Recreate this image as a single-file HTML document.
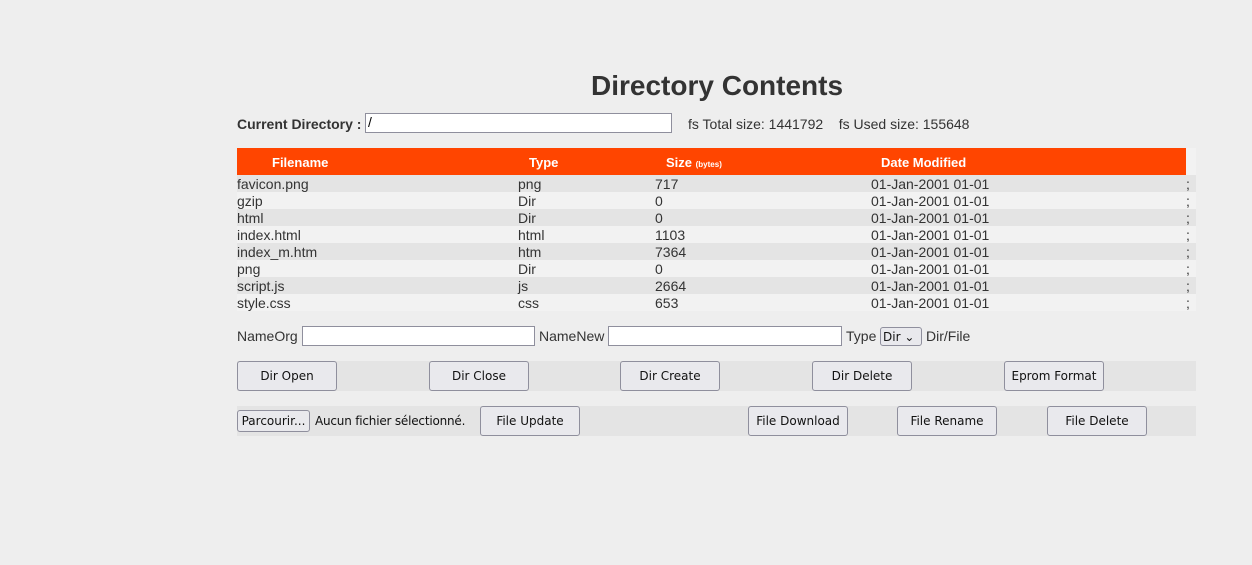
<!DOCTYPE html><html><head><style>
body{margin:0;width:1252px;height:565px;background:#eee;font-family:"Liberation Sans",sans-serif;color:#333;position:relative;overflow:hidden}
.a{position:absolute;white-space:nowrap}
.t{font-size:14px}
.btn{position:absolute;width:98px;height:28px;border:1px solid #8f8f9d;border-radius:3px;background:#e9e9ed;font-family:"DejaVu Sans",sans-serif;font-size:12px;color:#111;text-align:center;line-height:29px}
.inp{position:absolute;background:#fff;border:1px solid #8f8f9d;height:18px}
.row{position:absolute;left:237px;width:959px;height:17px;font-size:14px;line-height:19px}
.row span{position:absolute}
</style></head><body>
<div class="a" style="left:591px;top:70px;font-size:28px;font-weight:bold">Directory Contents</div>
<div class="a t" style="left:237px;top:116px;font-weight:bold">Current Directory :</div>
<div class="inp" style="left:365px;top:113px;width:305px"><span style="font-size:14px;padding-left:2px;color:#000">/</span></div>
<div class="a t" style="left:688px;top:116px">fs Total size: 1441792 &nbsp;&nbsp; fs Used size: 155648</div>
<div class="a" style="left:237px;top:148px;width:949px;height:27px;background:#ff4500"></div>
<div class="a" style="left:1186px;top:148px;width:10px;height:27px;background:#f2f2f2"></div>
<div class="a" style="left:272px;top:155px;color:#fff;font-weight:bold;font-size:13px">Filename</div>
<div class="a" style="left:529px;top:155px;color:#fff;font-weight:bold;font-size:13px">Type</div>
<div class="a" style="left:666px;top:155px;color:#fff;font-weight:bold;font-size:13px">Size <span style="font-size:8px">(bytes)</span></div>
<div class="a" style="left:881px;top:155px;color:#fff;font-weight:bold;font-size:13px">Date Modified</div>
<div class="row" style="top:175px;background:#e4e4e4"><span style="left:0">favicon.png</span><span style="left:281px">png</span><span style="left:418px">717</span><span style="left:634px">01-Jan-2001 01-01</span><span style="left:949px">;</span></div>
<div class="row" style="top:192px;background:#f2f2f2"><span style="left:0">gzip</span><span style="left:281px">Dir</span><span style="left:418px">0</span><span style="left:634px">01-Jan-2001 01-01</span><span style="left:949px">;</span></div>
<div class="row" style="top:209px;background:#e4e4e4"><span style="left:0">html</span><span style="left:281px">Dir</span><span style="left:418px">0</span><span style="left:634px">01-Jan-2001 01-01</span><span style="left:949px">;</span></div>
<div class="row" style="top:226px;background:#f2f2f2"><span style="left:0">index.html</span><span style="left:281px">html</span><span style="left:418px">1103</span><span style="left:634px">01-Jan-2001 01-01</span><span style="left:949px">;</span></div>
<div class="row" style="top:243px;background:#e4e4e4"><span style="left:0">index_m.htm</span><span style="left:281px">htm</span><span style="left:418px">7364</span><span style="left:634px">01-Jan-2001 01-01</span><span style="left:949px">;</span></div>
<div class="row" style="top:260px;background:#f2f2f2"><span style="left:0">png</span><span style="left:281px">Dir</span><span style="left:418px">0</span><span style="left:634px">01-Jan-2001 01-01</span><span style="left:949px">;</span></div>
<div class="row" style="top:277px;background:#e4e4e4"><span style="left:0">script.js</span><span style="left:281px">js</span><span style="left:418px">2664</span><span style="left:634px">01-Jan-2001 01-01</span><span style="left:949px">;</span></div>
<div class="row" style="top:294px;background:#f2f2f2"><span style="left:0">style.css</span><span style="left:281px">css</span><span style="left:418px">653</span><span style="left:634px">01-Jan-2001 01-01</span><span style="left:949px">;</span></div>
<div class="a t" style="left:237px;top:328px">NameOrg</div>
<div class="inp" style="left:302px;top:326px;width:231px"></div>
<div class="a t" style="left:539px;top:328px">NameNew</div>
<div class="inp" style="left:608px;top:326px;width:232px"></div>
<div class="a t" style="left:846px;top:328px">Type</div>
<div class="a" style="left:880px;top:327px;width:42px;height:19px;border:1px solid #8f8f9d;border-radius:3px;background:#e9e9ed;font-size:12px;font-family:'DejaVu Sans',sans-serif;line-height:19px;padding-left:2px;box-sizing:border-box;color:#111">Dir &#8964;</div>
<div class="a t" style="left:926px;top:328px">Dir/File</div>
<div class="a" style="left:237px;top:361px;width:959px;height:30px;background:#e4e4e4"></div>
<div class="btn" style="left:237px;top:361px">Dir Open</div>
<div class="btn" style="left:429px;top:361px">Dir Close</div>
<div class="btn" style="left:620px;top:361px">Dir Create</div>
<div class="btn" style="left:812px;top:361px">Dir Delete</div>
<div class="btn" style="left:1004px;top:361px">Eprom Format</div>
<div class="a" style="left:237px;top:406px;width:959px;height:30px;background:#e4e4e4"></div>
<div class="btn" style="left:237px;top:410px;width:71px;height:20px;line-height:21px">Parcourir...</div>
<div class="a" style="left:315px;top:414px;font-size:12px;font-family:'DejaVu Sans',sans-serif;color:#111;letter-spacing:-0.2px">Aucun fichier sélectionné.</div>
<div class="btn" style="left:480px;top:406px">File Update</div>
<div class="btn" style="left:748px;top:406px">File Download</div>
<div class="btn" style="left:897px;top:406px">File Rename</div>
<div class="btn" style="left:1047px;top:406px">File Delete</div>
</body></html>
